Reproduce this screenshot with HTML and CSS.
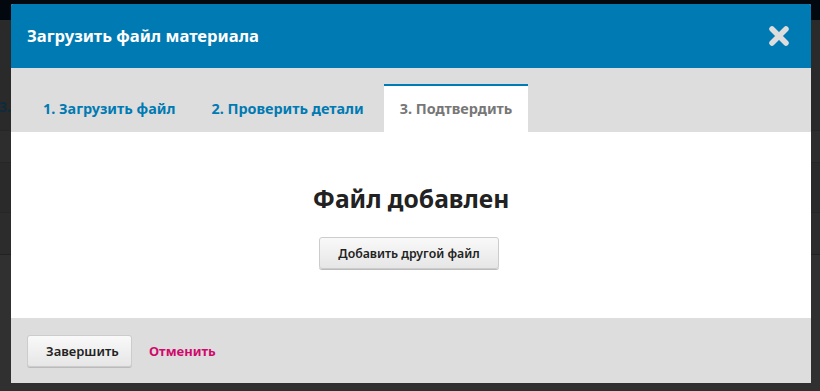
FILE: index.html
```html
<!DOCTYPE html>
<html lang="ru">
<head>
    <meta charset="UTF-8">
    <meta name="viewport" content="width=device-width, initial-scale=1.0">
    <title>Загрузить файл материала</title>
    <link rel="stylesheet" href="styles.css">
</head>
<body>
    <div class="page-behind">
        <div class="page-top"></div>
        <div class="page-row row-steps"><span class="page-step">3.</span></div>
        <div class="page-row row-a"></div>
        <div class="page-row row-b"></div>
        <div class="page-row row-c"></div>
        <div class="page-row row-d"></div>
    </div>

    <div class="modal">
        <div class="modal-header">
            <h2>Загрузить файл материала</h2>
            <button type="button" class="close-button" aria-label="Закрыть">
                <svg width="24" height="24" viewBox="0 0 24 24">
                    <path d="M5 5 L19 19 M19 5 L5 19" stroke="#dddddd" stroke-width="5.5" stroke-linecap="round"></path>
                </svg>
            </button>
        </div>

        <div class="tabs">
            <a class="tab">1. Загрузить файл</a>
            <a class="tab">2. Проверить детали</a>
            <a class="tab active">3. Подтвердить</a>
        </div>

        <div class="modal-body">
            <h3>Файл добавлен</h3>
            <button type="button" class="btn btn-add">Добавить другой файл</button>
        </div>

        <div class="modal-footer">
            <button type="button" class="btn btn-footer">Завершить</button>
            <a class="cancel">Отменить</a>
        </div>
    </div>
</body>
</html>
```

FILE: styles.css
```css
* {
    margin: 0;
    padding: 0;
    box-sizing: border-box;
}

body {
    width: 820px;
    height: 391px;
    overflow: hidden;
    background: #303030;
    font-family: 'Noto Sans', 'Open Sans', sans-serif;
}

/* page that sits under the dimmed overlay */
.page-behind {
    display: flex;
    flex-direction: column;
}

.page-top {
    height: 20px;
    background: #02080e;
}

.page-row {
    border-bottom: 1px solid #262626;
}

.row-steps {
    height: 111px;
    background: #2a2a2a;
    padding-top: 77px;
}

.page-step {
    display: block;
    font-size: 14px;
    font-weight: 700;
    color: #0e2a3d;
    margin-left: -1px;
}

.row-a {
    height: 32px;
    background: #2d2d2d;
}

.row-b {
    height: 50px;
    background: #2a2a2a;
}

.row-c {
    height: 42px;
    background: #2c2c2c;
    border-bottom-color: #222222;
}

.row-d {
    height: 140px;
    background: #303030;
    border-bottom: none;
}

/* modal window over the page */
.modal {
    position: absolute;
    left: 11px;
    top: 4px;
    width: 800px;
    height: 379px;
    display: flex;
    flex-direction: column;
    background: #ffffff;
    border-radius: 2px 2px 0 0;
    overflow: hidden;
}

.modal-header {
    height: 64px;
    background: #007ab2;
    display: flex;
    align-items: center;
    justify-content: space-between;
    padding: 0 20px 0 16px;
}

.modal-header h2 {
    color: #ffffff;
    font-size: 16.6px;
    font-weight: 700;
    margin-top: -2px;
}

.close-button {
    background: none;
    border: none;
    width: 24px;
    height: 24px;
    display: flex;
    cursor: pointer;
}

.tabs {
    height: 64px;
    background: #dddddd;
    display: flex;
    align-items: flex-end;
    padding-left: 16px;
}

.tab {
    height: 48px;
    display: flex;
    align-items: center;
    padding: 0 16px 2px;
    margin-right: 4px;
    font-size: 14.4px;
    font-weight: 700;
    color: #007ab2;
    border-top: 2px solid transparent;
}

.tab.active {
    background: #ffffff;
    color: #777777;
    border-top-color: #007ab2;
}

.modal-body {
    flex: 1;
    display: flex;
    flex-direction: column;
    align-items: center;
    padding-top: 50px;
}

.modal-body h3 {
    font-size: 24.6px;
    font-weight: 700;
    color: #222222;
    margin-bottom: 22px;
}

.btn {
    height: 32px;
    padding: 0 18px;
    font-family: inherit;
    font-size: 12.3px;
    font-weight: 600;
    color: #222222;
    background: linear-gradient(#f9f9f9, #e6e6e6);
    border: 1px solid #cccccc;
    border-radius: 3px;
    box-shadow: 0 1px 0 #bbbbbb;
}

.btn-add {
    margin-right: 4px;
}

.modal-footer {
    height: 65px;
    background: #dddddd;
    display: flex;
    align-items: center;
    padding: 0 16px;
    gap: 17px;
}

.btn-footer {
    width: 105px;
    font-size: 13px;
    margin-top: 1px;
}

.cancel {
    font-size: 13px;
    font-weight: 700;
    color: #d00a6c;
}
```
